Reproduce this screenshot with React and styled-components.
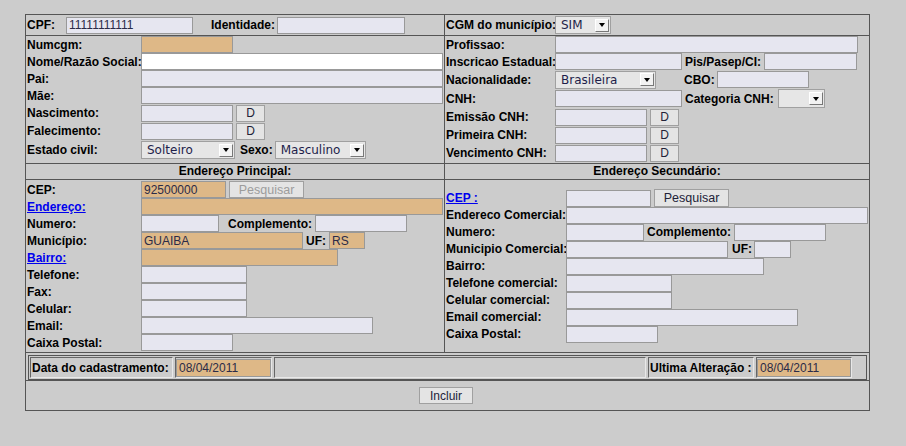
import styled, { createGlobalStyle } from "styled-components";

const GlobalStyle = createGlobalStyle`
  html, body {
    margin: 0;
    padding: 0;
    background: #cccccc;
  }
  body {
    font-family: "Liberation Sans", Arial, sans-serif;
    font-size: 12px;
    color: #000;
  }
`;

const tones = {
  lav: "#e6e6f0",
  white: "#ffffff",
  tan: "#deb887",
};

const Page = styled.div`
  padding: 14px 0 0 25px;
  min-height: 446px;
  box-sizing: border-box;
`;

const Frame = styled.div`
  width: 845px;
  box-sizing: border-box;
  border: 1px solid #555;
`;

const Split = styled.div`
  display: grid;
  grid-template-columns: 419px 424px;
  height: ${(p) => p.$h}px;
  border-bottom: 1px solid #555;
`;

const Half = styled.div`
  display: flex;
  flex-direction: column;
  min-width: 0;
  justify-content: ${(p) => (p.$center ? "center" : "flex-start")};
  border-right: ${(p) => (p.$divider ? "1px solid #555" : "none")};
`;

const Body = styled.div`
  flex: 1;
  display: flex;
  flex-direction: column;
  justify-content: ${(p) => (p.$center ? "center" : "flex-start")};
  padding-top: ${(p) => p.$pt || 0}px;
`;

const Header = styled.div`
  height: 15px;
  line-height: 15px;
  border-bottom: 1px solid #555;
  text-align: center;
  font-weight: bold;
`;

const Row = styled.div`
  display: flex;
  align-items: center;
  height: ${(p) => p.$h || 17}px;
`;

const Label = styled.span`
  flex: none;
  box-sizing: border-box;
  width: ${(p) => (p.$w ? `${p.$w}px` : "auto")};
  margin-left: ${(p) => p.$ml || 0}px;
  padding-left: ${(p) => (p.$w ? 1 : 0)}px;
  font-weight: bold;
  white-space: nowrap;
`;

const LinkLabel = styled(Label).attrs({ as: "a", href: "#" })`
  color: #0000ee;
  text-decoration: underline;
`;

const Field = styled.input`
  flex: none;
  box-sizing: border-box;
  width: ${(p) => p.$w}px;
  height: ${(p) => p.$h || 17}px;
  margin: 0 0 0 ${(p) => p.$ml || 0}px;
  padding: 0 2px;
  border: 1px solid #999;
  background: ${(p) => tones[p.$tone || "lav"]};
  font: 12px "Liberation Sans", Arial, sans-serif;
  color: #2b2b48;
  outline: none;
`;

const SelectBox = styled.div`
  flex: none;
  display: flex;
  align-items: center;
  box-sizing: border-box;
  width: ${(p) => p.$w}px;
  height: ${(p) => p.$h || 18}px;
  margin-left: ${(p) => p.$ml || 0}px;
  padding: 0 1px 0 5px;
  border: 1px solid #a0a0a0;
  background: #e6e6e6;
  font: 12px "DejaVu Sans", sans-serif;
  color: #1e1e4a;
`;

const SelectText = styled.span`
  flex: 1;
  overflow: hidden;
  white-space: nowrap;
`;

const SelectArrow = styled.span`
  flex: none;
  width: 14px;
  height: 13px;
  box-sizing: border-box;
  display: flex;
  align-items: center;
  justify-content: center;
  background: #f2f2f2;
  border-top: 1px solid #fff;
  border-left: 1px solid #fff;
  border-right: 1px solid #777;
  border-bottom: 1px solid #777;

  &::after {
    content: "";
    border-left: 3.5px solid transparent;
    border-right: 3.5px solid transparent;
    border-top: 4px solid #000;
  }
`;

const Btn = styled.button`
  flex: none;
  box-sizing: border-box;
  width: ${(p) => p.$w}px;
  height: ${(p) => p.$h || 17}px;
  margin-left: ${(p) => p.$ml || 0}px;
  padding: 0;
  border: 1px solid #a0a0a0;
  background: #e4e4e4;
  font: ${(p) => p.$fs || 12}px "Liberation Sans", Arial, sans-serif;
  color: ${(p) => (p.disabled ? "#9c9c9c" : "#222238")};
`;

const DatesRow = styled.div`
  height: 28px;
  box-sizing: border-box;
  padding: 2px 2px 1px;
  border-bottom: 1px solid #555;
`;

const DatesTable = styled.div`
  display: flex;
  gap: 2px;
  height: 25px;
  box-sizing: border-box;
  padding: 1px 14px 1px 1px;
  border: 1px solid #555;
`;

const DateCell = styled.div`
  display: flex;
  align-items: center;
  box-sizing: border-box;
  flex: ${(p) => (p.$grow ? "1" : "none")};
  width: ${(p) => (p.$w ? `${p.$w}px` : "auto")};
  padding-left: ${(p) => p.$pl || 0}px;
  border-top: 1px solid #666;
  border-left: 1px solid #666;
  border-right: 1px solid #e8e8e8;
  border-bottom: 1px solid #e8e8e8;
  font-weight: bold;
  white-space: nowrap;
`;

const ActionRow = styled.div`
  height: 29px;
  display: flex;
  align-items: center;
  justify-content: center;
  padding-right: 3px;
`;

const Select = ({ w, h, ml, value }) => (
  <SelectBox $w={w} $h={h} $ml={ml}>
    <SelectText>{value}</SelectText>
    <SelectArrow />
  </SelectBox>
);

const Input = ({ w, h, ml, tone, value = "" }) => (
  <Field $w={w} $h={h} $ml={ml} $tone={tone} value={value} readOnly />
);

export default function App() {
  return (
    <Page>
      <GlobalStyle />
      <Frame>
        <Split $h={20}>
          <Half $divider $center>
            <Row $h={20}>
              <Label $w={40}>CPF:</Label>
              <Input w={127} value="11111111111" />
              <Label $ml={18}>Identidade:</Label>
              <Input w={128} ml={2} />
            </Row>
          </Half>
          <Half $center>
            <Row $h={20}>
              <Label $w={110}>CGM do município:</Label>
              <Select w={56} value="SIM" />
            </Row>
          </Half>
        </Split>

        <Split $h={127}>
          <Half $divider>
            <Row>
              <Label $w={115}>Numcgm:</Label>
              <Input w={92} tone="tan" />
            </Row>
            <Row>
              <Label $w={115}>Nome/Razão Social:</Label>
              <Input w={302} tone="white" />
            </Row>
            <Row>
              <Label $w={115}>Pai:</Label>
              <Input w={302} />
            </Row>
            <Row>
              <Label $w={115}>Mãe:</Label>
              <Input w={302} />
            </Row>
            <Row $h={18}>
              <Label $w={115}>Nascimento:</Label>
              <Input w={92} />
              <Btn $w={29} $ml={3}>D</Btn>
            </Row>
            <Row $h={18}>
              <Label $w={115}>Falecimento:</Label>
              <Input w={92} />
              <Btn $w={29} $ml={3}>D</Btn>
            </Row>
            <Row $h={20}>
              <Label $w={115}>Estado civil:</Label>
              <Select w={94} value="Solteiro" />
              <Label $ml={5}>Sexo:</Label>
              <Select w={91} ml={2} value="Masculino" />
            </Row>
          </Half>
          <Half>
            <Row>
              <Label $w={110}>Profissao:</Label>
              <Input w={303} />
            </Row>
            <Row>
              <Label $w={110}>Inscricao Estadual:</Label>
              <Input w={127} />
              <Label $ml={3}>Pis/Pasep/CI:</Label>
              <Input w={93} ml={3} />
            </Row>
            <Row $h={19}>
              <Label $w={110}>Nacionalidade:</Label>
              <Select w={101} value="Brasileira" />
              <Label $ml={28}>CBO:</Label>
              <Input w={92} ml={2} />
            </Row>
            <Row $h={19}>
              <Label $w={110}>CNH:</Label>
              <Input w={127} />
              <Label $ml={3}>Categoria CNH:</Label>
              <Select w={47} h={19} ml={4} value="" />
            </Row>
            <Row $h={18}>
              <Label $w={110}>Emissão CNH:</Label>
              <Input w={92} />
              <Btn $w={29} $ml={3}>D</Btn>
            </Row>
            <Row $h={18}>
              <Label $w={110}>Primeira CNH:</Label>
              <Input w={92} />
              <Btn $w={29} $ml={3}>D</Btn>
            </Row>
            <Row $h={18}>
              <Label $w={110}>Vencimento CNH:</Label>
              <Input w={92} />
              <Btn $w={29} $ml={3}>D</Btn>
            </Row>
          </Half>
        </Split>

        <Split $h={188}>
          <Half $divider>
            <Header>Endereço Principal:</Header>
            <Body $pt={1}>
              <Row>
                <Label $w={115}>CEP:</Label>
                <Input w={85} tone="tan" value="92500000" />
                <Btn $w={75} $ml={3} $fs={12.5} disabled>
                  Pesquisar
                </Btn>
              </Row>
              <Row>
                <LinkLabel $w={115}>Endereço:</LinkLabel>
                <Input w={302} tone="tan" />
              </Row>
              <Row>
                <Label $w={115}>Numero:</Label>
                <Input w={78} />
                <Label $ml={9}>Complemento:</Label>
                <Input w={92} ml={3} />
              </Row>
              <Row>
                <Label $w={115}>Município:</Label>
                <Input w={162} tone="tan" value="GUAIBA" />
                <Label $ml={3}>UF:</Label>
                <Input w={36} ml={3} tone="tan" value="RS" />
              </Row>
              <Row>
                <LinkLabel $w={115}>Bairro:</LinkLabel>
                <Input w={197} tone="tan" />
              </Row>
              <Row>
                <Label $w={115}>Telefone:</Label>
                <Input w={106} />
              </Row>
              <Row>
                <Label $w={115}>Fax:</Label>
                <Input w={106} />
              </Row>
              <Row>
                <Label $w={115}>Celular:</Label>
                <Input w={106} />
              </Row>
              <Row>
                <Label $w={115}>Email:</Label>
                <Input w={232} />
              </Row>
              <Row>
                <Label $w={115}>Caixa Postal:</Label>
                <Input w={92} />
              </Row>
            </Body>
          </Half>
          <Half>
            <Header>Endereço Secundário:</Header>
            <Body $center>
              <Row>
                <LinkLabel $w={121}>CEP :</LinkLabel>
                <Input w={85} />
                <Btn $w={75} $h={18} $ml={3} $fs={12.5}>
                  Pesquisar
                </Btn>
              </Row>
              <Row>
                <Label $w={121}>Endereco Comercial:</Label>
                <Input w={302} />
              </Row>
              <Row>
                <Label $w={121}>Numero:</Label>
                <Input w={78} />
                <Label $ml={3}>Complemento:</Label>
                <Input w={92} ml={3} />
              </Row>
              <Row>
                <Label $w={121}>Municipio Comercial:</Label>
                <Input w={162} />
                <Label $ml={4}>UF:</Label>
                <Input w={37} ml={2} />
              </Row>
              <Row>
                <Label $w={121}>Bairro:</Label>
                <Input w={198} />
              </Row>
              <Row>
                <Label $w={121}>Telefone comercial:</Label>
                <Input w={106} />
              </Row>
              <Row>
                <Label $w={121}>Celular comercial:</Label>
                <Input w={106} />
              </Row>
              <Row>
                <Label $w={121}>Email comercial:</Label>
                <Input w={232} />
              </Row>
              <Row>
                <Label $w={121}>Caixa Postal:</Label>
                <Input w={92} />
              </Row>
            </Body>
          </Half>
        </Split>

        <DatesRow>
          <DatesTable>
            <DateCell $w={143} $pl={1}>
              Data do cadastramento:
            </DateCell>
            <DateCell>
              <Input w={95} h={18} tone="tan" value="08/04/2011" />
            </DateCell>
            <DateCell $grow />
            <DateCell $w={106} $pl={1}>
              Ultima Alteração :
            </DateCell>
            <DateCell>
              <Input w={94} h={18} tone="tan" value="08/04/2011" />
            </DateCell>
          </DatesTable>
        </DatesRow>

        <ActionRow>
          <Btn $w={54}>Incluir</Btn>
        </ActionRow>
      </Frame>
    </Page>
  );
}
